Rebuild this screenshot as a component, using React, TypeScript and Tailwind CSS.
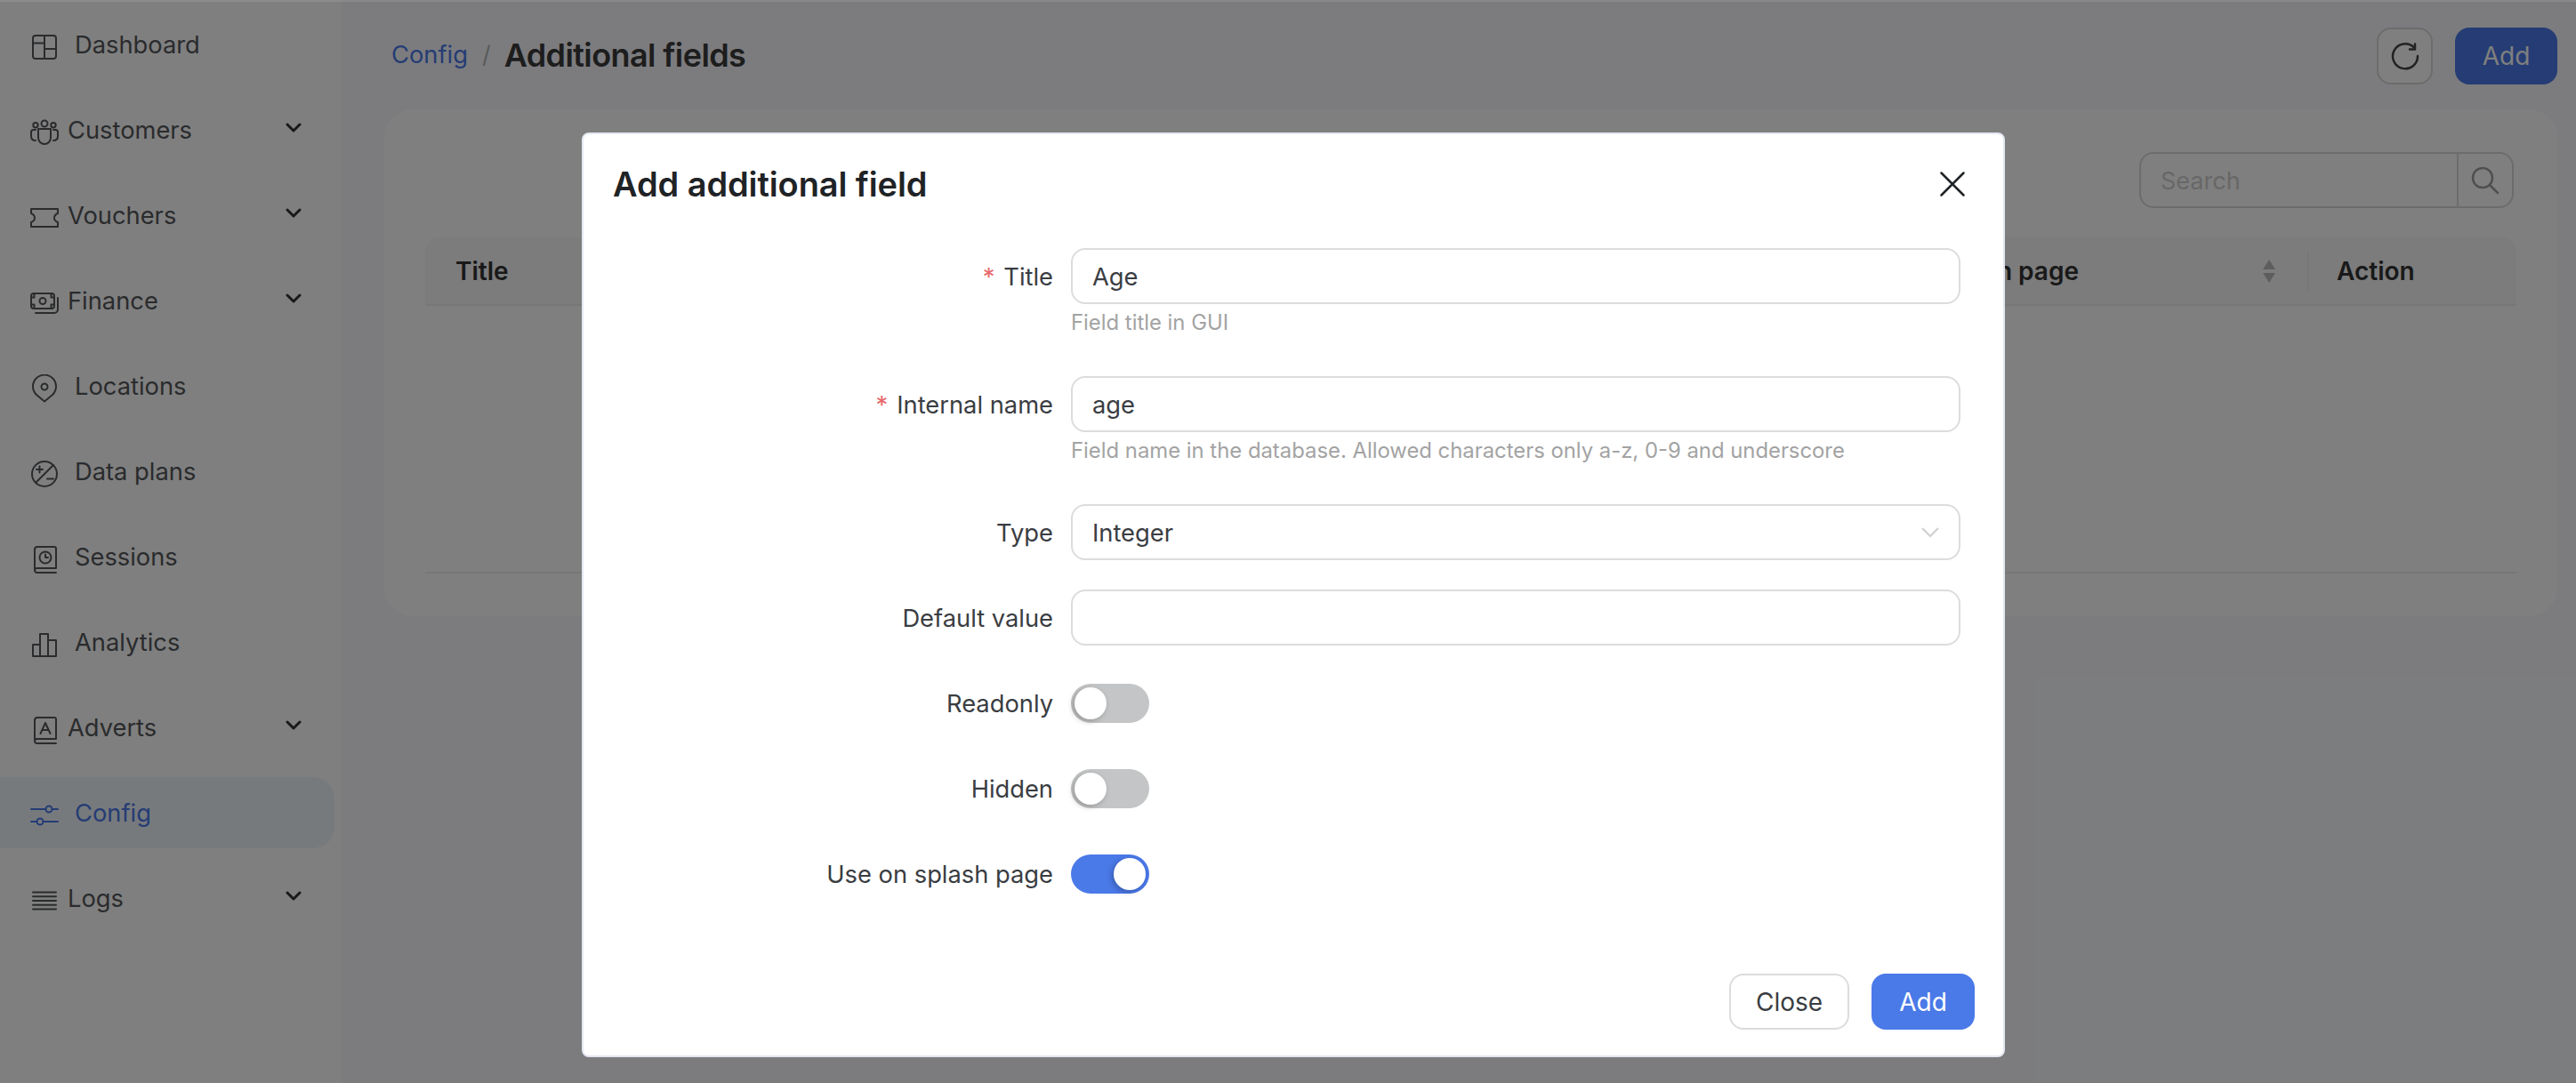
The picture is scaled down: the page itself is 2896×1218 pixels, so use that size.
import type { ReactNode } from "react";

const Icon = ({ children }: { children: ReactNode }) => (
  <svg
    viewBox="0 0 32 32"
    fill="none"
    stroke="currentColor"
    strokeWidth="2"
    strokeLinecap="round"
    strokeLinejoin="round"
    className="mt-[6px] h-8 w-8 shrink-0"
  >
    {children}
  </svg>
);

const icons: Record<string, ReactNode> = {
  dashboard: (
    <>
      <rect x="3" y="3" width="26" height="26" rx="3" />
      <path d="M3 11.500h13M16 3v26M16 18h13" />
    </>
  ),
  customers: (
    <>
      <circle cx="16" cy="6" r="3.500" />
      <circle cx="6" cy="7.700" r="2.700" />
      <circle cx="26" cy="7.700" r="2.700" />
      <path d="M9 12h14v10a7 7 0 0 1-14 0z" />
      <path d="M6 13H3.500C2 13 1 14 1 15.500V20c0 3 2 5 5 5" />
      <path d="M26 13h2.500c1.500 0 2.500 1 2.500 2.500V20c0 3-2 5-5 5" />
    </>
  ),
  vouchers: <path d="M1 6h30v5c-2.500 1-4 3-4 5s1.500 4 4 5v5H1v-5c2.500-1 4-3 4-5s-1.500-4-4-5z" />,
  finance: (
    <>
      <rect x="1" y="5" width="26" height="17" rx="3" />
      <circle cx="14" cy="13.500" r="3.500" />
      <path d="M1 9.500h3.500V5M27 9.500h-3.500V5M1 17.500h3.500V22M27 17.500h-3.500V22" />
      <path d="M31 10v13a4 4 0 0 1-4 4H6" />
    </>
  ),
  locations: (
    <>
      <path d="M16 30.500 7 23A13 13 0 1 1 25 23z" />
      <circle cx="16" cy="14" r="3.500" />
    </>
  ),
  plans: (
    <>
      <circle cx="16" cy="16" r="14" />
      <path d="M6 26 26 6M7 11h7M10.500 7.500v7M19 21.500h7" />
    </>
  ),
  sessions: (
    <>
      <path d="M5 27V5a3 3 0 0 1 3-3h19a2 2 0 0 1 2 2v22H7.500A2.500 2.500 0 0 0 5 28.500 2.500 2.500 0 0 0 7.500 31H29" />
      <circle cx="17" cy="14" r="6.500" />
      <path d="M17 10.500V14h3" />
    </>
  ),
  analytics: <path d="M3 29V16h8M11 29V4h9v25M20 11h9v18H3" />,
  adverts: (
    <>
      <path d="M5 27V5a3 3 0 0 1 3-3h19a2 2 0 0 1 2 2v22H7.500A2.500 2.500 0 0 0 5 28.500 2.500 2.500 0 0 0 7.500 31H29" />
      <path d="m11.500 20 5.500-12 5.500 12M13.500 16h7" />
    </>
  ),
  config: (
    <>
      <path d="M1 9h16.500M25 9h6M1 23h6.500M14.500 23H31" />
      <circle cx="21" cy="9" r="3.500" />
      <circle cx="11" cy="23" r="3.500" />
    </>
  ),
  logs: <path d="M3 6.500h26M3 11.250h26M3 16h26M3 20.750h26M3 25.500h26" />,
};

const menu = [
  { label: "Dashboard", icon: "dashboard" },
  { label: "Customers", icon: "customers", sub: true },
  { label: "Vouchers", icon: "vouchers", sub: true },
  { label: "Finance", icon: "finance", sub: true },
  { label: "Locations", icon: "locations" },
  { label: "Data plans", icon: "plans" },
  { label: "Sessions", icon: "sessions" },
  { label: "Analytics", icon: "analytics" },
  { label: "Adverts", icon: "adverts", sub: true },
  { label: "Config", icon: "config", active: true },
  { label: "Logs", icon: "logs", sub: true },
];

const Sidebar = () => (
  <aside className="flex w-[384px] shrink-0 flex-col gap-4 bg-white pt-[10px] pr-2">
    {menu.map((item) => (
      <div
        key={item.label}
        className={`flex h-20 items-center rounded-r-3xl pl-[34px] text-[27.3px] ${
          item.active ? "bg-[#eef5fb] text-[#4a79e8]" : "text-[#55575a]"
        }`}
      >
        <Icon>{icons[item.icon]}</Icon>
        <span className={`flex-1 pt-[2px] ${item.sub ? "ml-[10px]" : "ml-[18px]"}`}>{item.label}</span>
        {item.sub && (
          <svg viewBox="0 0 18 11" fill="none" stroke="#333" strokeWidth="3" strokeLinecap="round" strokeLinejoin="round" className="mr-[37px] mb-[5px] h-[11px] w-[18px]">
            <path d="m2 2 7 7 7-7" />
          </svg>
        )}
      </div>
    ))}
  </aside>
);

const Main = () => (
  <main className="flex-1 bg-[#f8f9fe] pr-[21px] pl-[48px]">
    <header className="flex h-[123px] items-start justify-between">
      <div className="mt-[36px] ml-2 flex h-[52px] items-center text-[#b5b5b5]">
        <span className="text-[27.3px] text-[#4a79e8]">Config</span>
        <span className="mr-[15px] ml-[16px] text-[27px]">/</span>
        <span className="text-[36px] font-semibold tracking-[-0.6px] text-[#3a3a3a]">Additional fields</span>
      </div>
      <div className="mt-[31px] flex gap-[25px]">
        <button className="flex h-[64px] w-[63px] items-center justify-center rounded-2xl border-2 border-[#d9d9d9] bg-white text-[#444]">
          <svg viewBox="0 0 32 32" fill="none" stroke="currentColor" strokeWidth="2.500" strokeLinecap="round" strokeLinejoin="round" className="h-8 w-8">
            <path d="M25.500 6A14 14 0 1 0 30 16" />
            <path d="M27 2.500V8.500h-6" />
          </svg>
        </button>
        <button className="h-[64px] w-[115px] rounded-2xl bg-[#4a79e8] text-[28px] text-white">Add</button>
      </div>
    </header>
    <section className="h-[570px] rounded-[32px] bg-white px-[46px] pt-[48px]">
      <div className="flex justify-end pr-[3px]">
        <div className="flex h-[63px] w-[421px] items-center rounded-2xl border-2 border-[#d9d9d9]">
          <span className="flex-1 pt-[3px] pl-[22px] text-[27px] text-[#cfcfcf]">Search</span>
          <div className="flex h-full w-[62px] items-center justify-center border-l-2 border-[#d9d9d9] text-[#9e9e9e]">
            <svg viewBox="0 0 32 32" fill="none" stroke="currentColor" strokeWidth="2.500" strokeLinecap="round" className="h-8 w-8">
              <circle cx="13" cy="13" r="11" />
              <path d="m21 21 9 9" />
            </svg>
          </div>
        </div>
      </div>
      <div className="mt-[33px] flex h-[77px] items-center rounded-t-2xl border-b-2 border-[#efefef] bg-[#f8f8f8] text-[28px] font-semibold text-[#333]">
        <span className="ml-[34px] flex-1">Title</span>
        <span className="mr-[204px]">Use on splash page</span>
        <svg viewBox="0 0 20 32" className="h-8 w-5 fill-[#bbb]">
          <path d="M10 3 17 14H3zM10 29 3 18h14z" />
        </svg>
        <span className="ml-[33px] h-[44px] w-px bg-[#e6e6e6]" />
        <span className="ml-[32px] w-[202px]">Action</span>
      </div>
      <div className="h-[301px] border-b-2 border-[#efefef]" />
    </section>
  </main>
);

const Req = () => <span className="mr-[10px] text-[#e8666b]">*</span>;

const FieldRow = ({ label, children }: { label: ReactNode; children: ReactNode }) => (
  <div className="flex">
    <label className="flex h-[63px] w-[495px] shrink-0 items-center justify-end pt-[3px] text-[27.3px] text-[#3a3d42]">
      <span>{label}</span>
    </label>
    <div className="ml-[20px] w-[1000px]">{children}</div>
  </div>
);

const inputCls =
  "flex h-[63px] w-full items-center rounded-2xl border-2 border-[#dcdcdc] bg-white px-[22px] pt-[3px] text-[27.3px] text-[#3a3d42]";

const Toggle = ({ on }: { on?: boolean }) => (
  <span className={`flex h-[44px] w-[88px] items-center rounded-full p-1 ${on ? "justify-end bg-[#4a79e8]" : "bg-[#c4c5c6]"}`}>
    <span className="h-9 w-9 rounded-full bg-white shadow-[-2px_2px_6px_rgba(0,0,0,0.25)]" />
  </span>
);

const ToggleRow = ({ label, on }: { label: string; on?: boolean }) => (
  <div className="flex h-[44px] items-center">
    <label className="w-[495px] shrink-0 pt-[2px] text-right text-[27.3px] text-[#3a3d42]">{label}</label>
    <div className="ml-[20px]">
      <Toggle on={on} />
    </div>
  </div>
);

const Modal = () => (
  <div className="absolute top-[149px] left-[654px] h-[1040px] w-[1600px] rounded-lg border-2 border-[#e4e7f1] bg-white">
    <div className="flex items-center justify-between pt-[31px] pr-[43px] pb-[3px] pl-[33px]">
      <h2 className="text-[38px] leading-[50px] font-semibold tracking-[-0.1px] text-[#1f2326]">Add additional field</h2>
      <svg viewBox="0 0 28 28" fill="none" stroke="#1f2326" strokeWidth="2.500" strokeLinecap="round" className="h-7 w-7">
        <path d="m1.500 1.500 25 25M26.500 1.500l-25 25" />
      </svg>
    </div>
    <div className="mt-[44px] pl-[33px]">
      <FieldRow label={<><Req />Title</>}>
        <div className={inputCls}>Age</div>
        <p className="mt-[3px] h-[78px] text-[23.85px] text-[#a3a3a3]">Field title in GUI</p>
      </FieldRow>
      <FieldRow label={<><Req />Internal name</>}>
        <div className={inputCls}>age</div>
        <p className="mt-[3px] h-[78px] text-[23.85px] text-[#a3a3a3]">
          Field name in the database. Allowed characters only a-z, 0-9 and underscore
        </p>
      </FieldRow>
      <div className="mb-[33px]">
        <FieldRow label="Type">
          <div className={`${inputCls} justify-between`}>
            Integer
            <svg viewBox="0 0 20 12" fill="none" stroke="#cfcfcf" strokeWidth="2" className="mr-0 mb-[3px] h-3 w-5">
              <path d="m1 1 9 9 9-9" />
            </svg>
          </div>
        </FieldRow>
      </div>
      <FieldRow label="Default value">
        <div className={inputCls} />
      </FieldRow>
      <div className="mt-[43px] flex flex-col gap-[52px]">
        <ToggleRow label="Readonly" />
        <ToggleRow label="Hidden" />
        <ToggleRow label="Use on splash page" on />
      </div>
    </div>
    <div className="absolute right-[32px] bottom-[29px] flex gap-[25px]">
      <button className="h-[63px] w-[135px] rounded-2xl border-2 border-[#dcdcdc] bg-white text-[28px] text-[#3a3d42]">Close</button>
      <button className="h-[63px] w-[116px] rounded-2xl bg-[#4a79e8] text-[28px] text-white">Add</button>
    </div>
  </div>
);

export default function App() {
  return (
    <div className="relative flex h-[1218px] w-[2896px] overflow-hidden font-['Inter',sans-serif]">
      <Sidebar />
      <Main />
      <div className="absolute inset-0 bg-black/50" />
      <div className="absolute inset-x-0 top-0 h-[2px] bg-white/10" />
      <Modal />
    </div>
  );
}
